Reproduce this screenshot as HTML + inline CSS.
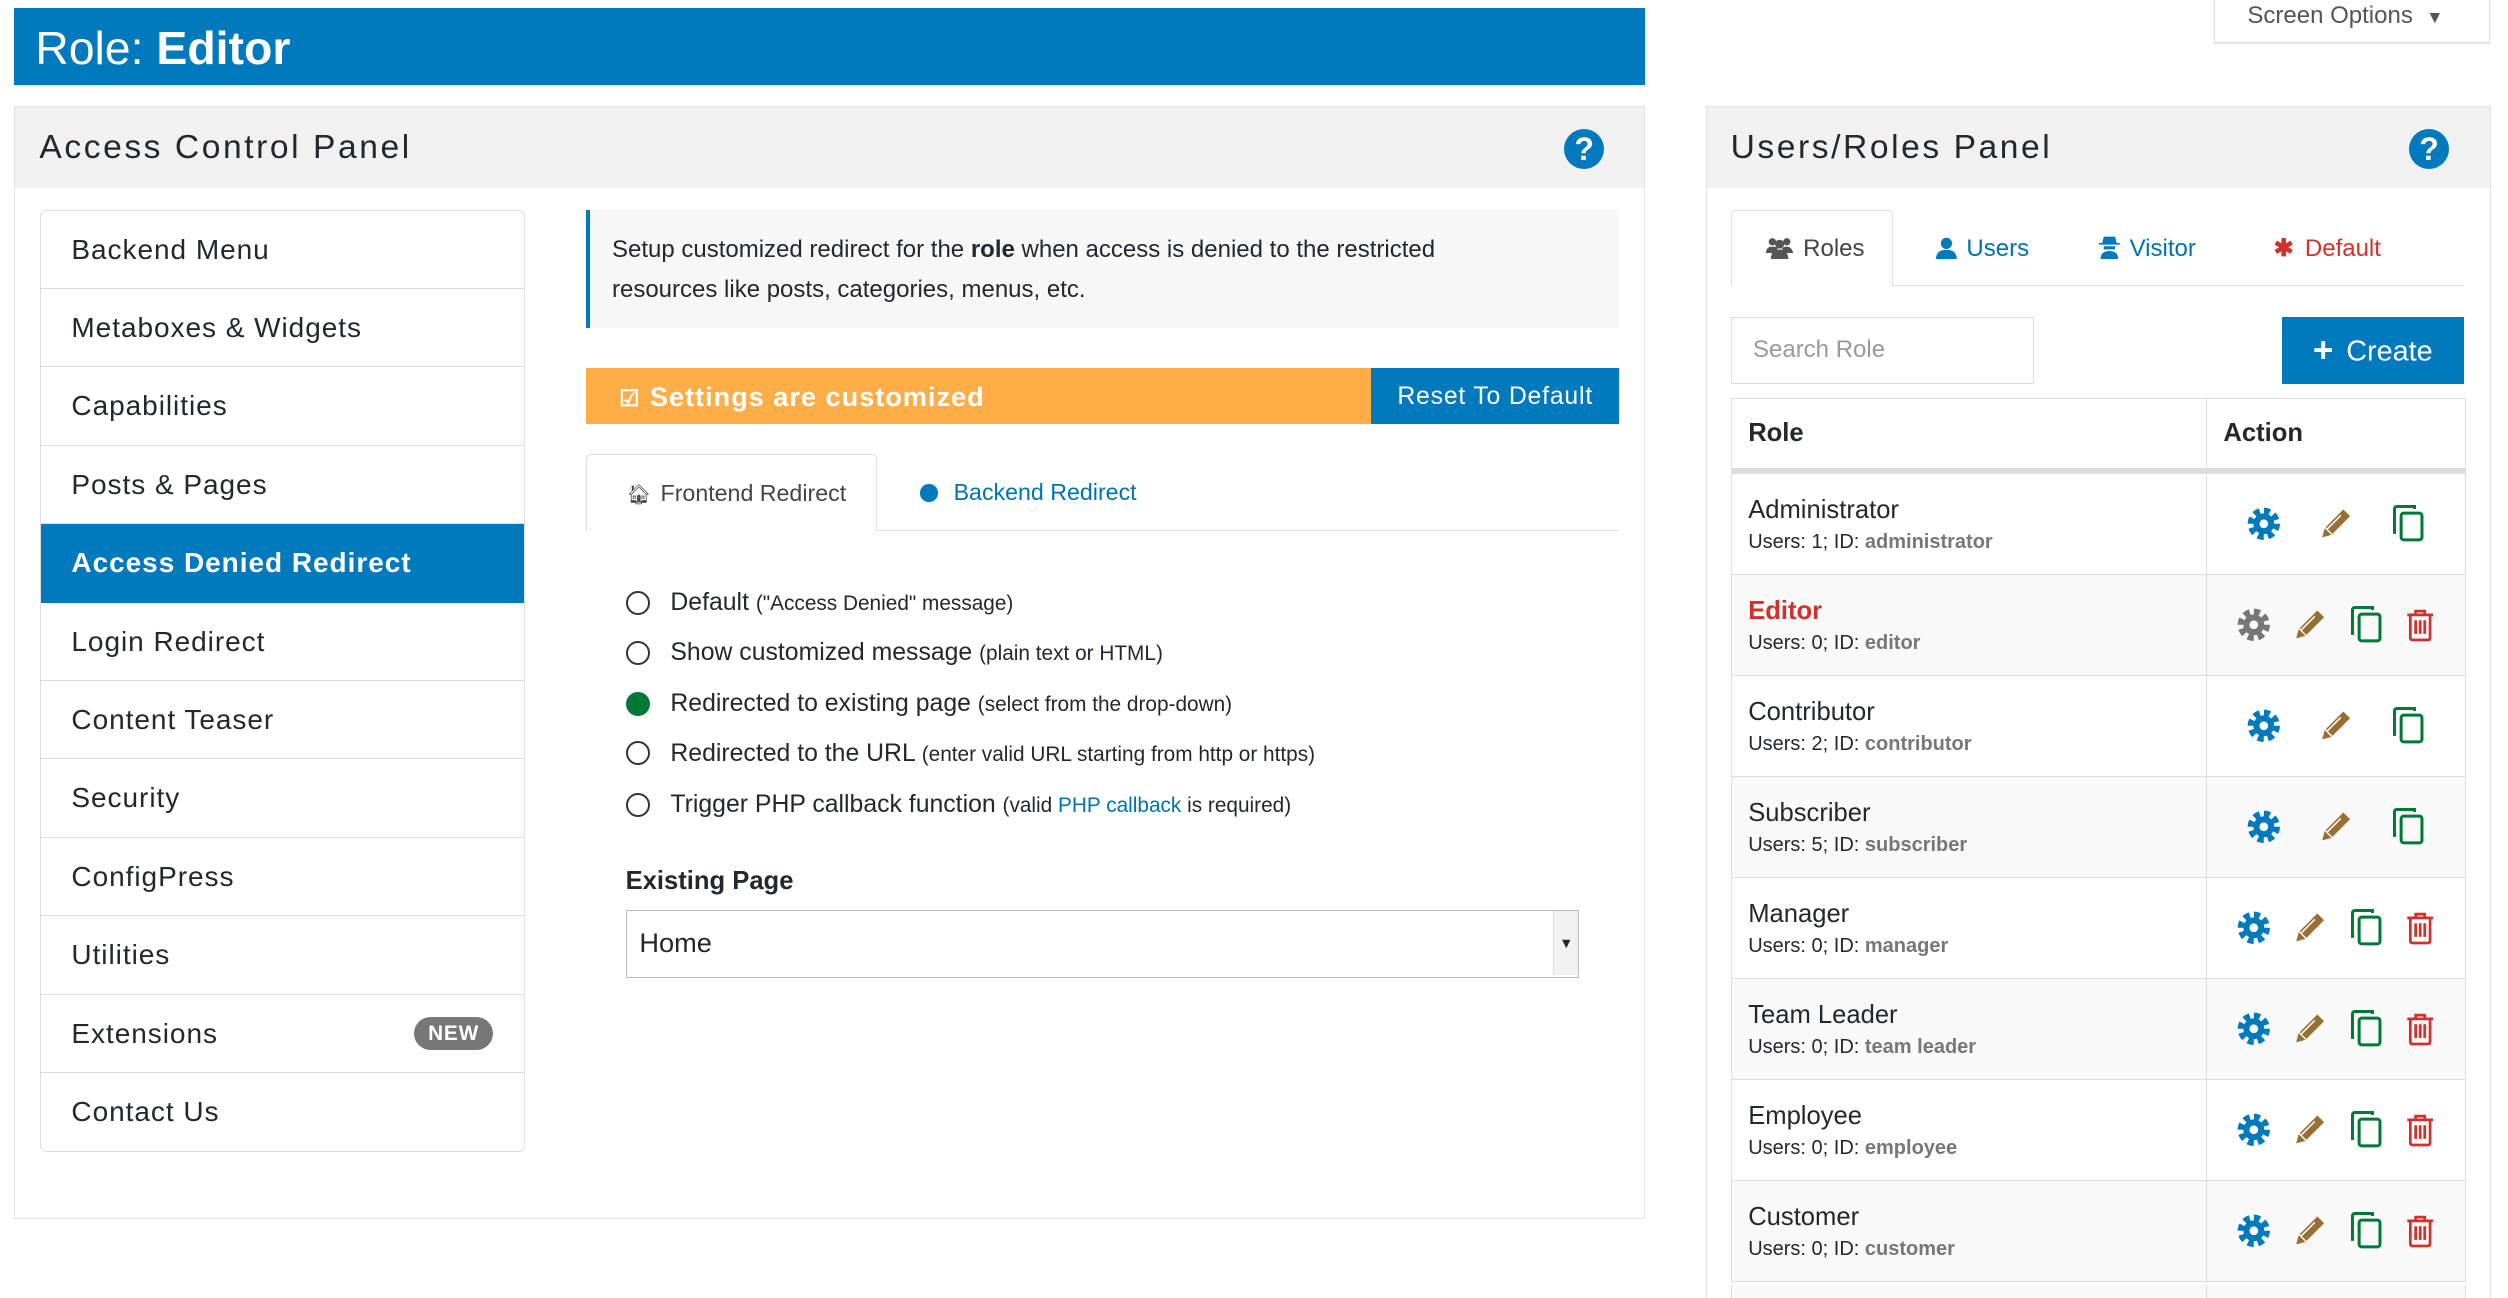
<!DOCTYPE html>
<html><head><meta charset="utf-8">
<style>
html,body{margin:0;padding:0;background:#fff;overflow:hidden}
body{width:2508px;height:1298px}
#w{zoom:1.6;width:1568px;height:812px;position:relative;overflow:hidden;font-family:"Liberation Sans",Arial,sans-serif;color:#23282d}
.a{position:absolute}
.title{left:9px;top:5px;width:1019px;height:48px;background:#0079bd;color:#fff;font-size:29px;line-height:50px;box-sizing:border-box;padding-left:13px}
.so{left:1384px;top:-2px;width:172px;height:29px;border:1px solid #ddd;border-top:0;box-shadow:0 1px 1px rgba(0,0,0,.08);font-size:15px;color:#555;line-height:24px;box-sizing:border-box;padding-left:20px}
.panel{border:1px solid #e2e2e2;background:#fff;box-sizing:border-box}
.ph{position:absolute;left:0;top:0;right:0;height:51px;background:#f1f1f1;font-size:21px;letter-spacing:1.6px;line-height:51px;padding-left:15px}
.help{position:absolute;width:25px;height:25px;border-radius:50%;background:#0079bd;color:#fff;font-weight:bold;font-size:20px;text-align:center;line-height:25px}
.menu{left:25px;top:131px;width:303px;height:589px;border:1px solid #ddd;border-radius:4px;box-sizing:border-box;overflow:hidden}
.mi{height:49px;border-bottom:1px solid #ddd;box-sizing:border-box;font-size:17.5px;letter-spacing:.6px;line-height:49px;padding-left:19px;position:relative}
.mi.act{background:#0079bd;color:#fff;font-weight:bold;border-color:#0079bd}
.new{position:absolute;right:19px;top:14px;background:#777;color:#fff;font-size:13px;font-weight:bold;letter-spacing:.5px;line-height:21px;height:21px;padding:0 9px;border-radius:11px}
.info{left:366px;top:131px;width:646px;height:74px;background:#f7f7f7;border-left:3px solid #0079bd;box-sizing:border-box;padding:13px 50px 0 14px;font-size:15px;line-height:25px}
.orange{left:366px;top:230px;width:491px;height:35px;background:#ffad46;color:#fff;font-weight:bold;font-size:17px;letter-spacing:.6px;line-height:36px;padding-left:21px;box-sizing:border-box}
.reset{left:857px;top:230px;width:155px;height:35px;background:#0079bd;color:#fff;font-size:15.5px;letter-spacing:.5px;line-height:36px;text-align:center}
.tabline{left:366px;top:331px;width:646px;height:1px;background:#ddd}
.tab1{left:366px;top:284px;width:182px;height:48px;border:1px solid #ddd;border-bottom:0;border-radius:3px 3px 0 0;background:#fff;box-sizing:border-box;font-size:14.5px;color:#444;line-height:48px;padding-left:25px}
.tab2{left:575px;top:284px;height:48px;line-height:48px;font-size:14.5px;color:#0073aa}
.rad{left:391px;font-size:15.5px;height:20px;line-height:20px}
.rad i{display:inline-block;width:15px;height:15px;border:1.5px solid #333;border-radius:50%;vertical-align:-3px;margin-right:13px;box-sizing:border-box}
.rad small{font-size:13px}
.sel{left:391px;top:569px;width:596px;height:42px;border:1px solid #bbb;box-sizing:border-box;font-size:17px;line-height:40px;padding-left:8px}
.sel b{position:absolute;right:0;top:0;width:15px;height:40px;background:#f1f1f1;border-left:1px solid #ddd;font-size:9px;line-height:42px;text-align:center}
.rt{position:absolute;top:132px;height:47px;line-height:47px;font-size:15px}
.rt svg{vertical-align:-2px;margin-right:6px}
.srch{left:1082px;top:198px;width:189px;height:42px;border:1px solid #ddd;box-sizing:border-box;color:#999;font-size:15px;line-height:40px;padding-left:13px}
.create{left:1426px;top:198px;width:114px;height:42px;background:#0079bd;color:#fff;font-size:18px;line-height:42px;text-align:center}
table{position:absolute;left:1082px;top:249px;width:459px;border-collapse:collapse;table-layout:fixed}
td,th{border:1px solid #ddd;padding:0 0 0 10px;text-align:left;vertical-align:middle}
th{height:43px;font-size:16px;border-bottom:4px solid #ddd}
td{height:62.5px}
td:first-child{padding-top:3px;box-sizing:border-box}
tr:nth-child(odd) td{background:#f9f9f9}
.nm{font-size:16px;line-height:20px}
.sub{font-size:12.5px;line-height:21px}
.sub b{color:#777}
.ic{white-space:nowrap;text-align:center;padding:0}
.ic svg{vertical-align:middle}
.i3 svg{margin:0 12px}
.i4 svg{margin:0 7px}
</style></head><body><div id="w">
<svg width="0" height="0" style="position:absolute">
<defs>
<symbol id="gear" viewBox="0 0 20 20"><circle cx="10" cy="10" r="6.2" fill="currentColor"/><circle cx="10" cy="10" r="7.8" fill="none" stroke="currentColor" stroke-width="3.6" stroke-dasharray="3.6 2.5"/><circle cx="10" cy="10" r="2.6" fill="#fff"/></symbol>
<symbol id="pen" viewBox="0 0 20 20"><path d="M14.5 1.5l4 4-10.5 10.5-4-4z" fill="currentColor"/><path d="M3.4 12.6l4 4-5.5 1.5z" fill="currentColor"/><path d="M5 13l8-8" stroke="#fff" stroke-width=".9"/></symbol>
<symbol id="copy" viewBox="0 0 20 24"><path d="M3 17H2V3q0-1.5 1.5-1.5H14V3" fill="none" stroke="currentColor" stroke-width="1.8"/><rect x="6" y="5.5" width="12.5" height="16" rx="1.5" fill="none" stroke="currentColor" stroke-width="1.8"/></symbol>
<symbol id="trash" viewBox="0 0 20 22"><path d="M1.5 4.5h17M7 4.5V2h6v2.5M3.5 5v14.5q0 1.5 1.5 1.5h10q1.5 0 1.5-1.5V5M7 8v9M10 8v9M13 8v9" fill="none" stroke="currentColor" stroke-width="1.8"/></symbol>
</defs></svg>

<div class="a title">Role: <b>Editor</b></div>
<div class="a so">Screen Options &nbsp;<span style="font-size:11px">▼</span></div>

<div class="a panel" style="left:9px;top:66px;width:1019px;height:696px">
<div class="ph">Access Control Panel</div><div class="help" style="left:968px;top:14px">?</div>
</div>
<div class="a menu">
<div class="mi">Backend Menu</div><div class="mi">Metaboxes &amp; Widgets</div><div class="mi">Capabilities</div><div class="mi">Posts &amp; Pages</div><div class="mi act">Access Denied Redirect</div><div class="mi">Login Redirect</div><div class="mi">Content Teaser</div><div class="mi">Security</div><div class="mi">ConfigPress</div><div class="mi">Utilities</div><div class="mi">Extensions<span class="new">NEW</span></div><div class="mi" style="border:0">Contact Us</div>
</div>
<div class="a info">Setup customized redirect for the <b>role</b> when access is denied to the restricted resources like posts, categories, menus, etc.</div>
<div class="a orange"><span style="font-size:14px;margin-right:6px">☑</span>Settings are customized</div>
<div class="a reset">Reset To Default</div>
<div class="a tabline"></div>
<div class="a tab1"><span style="font-size:12px;margin-right:6px">🏠︎</span>Frontend Redirect</div>
<div class="a tab2"><span style="display:inline-block;width:11px;height:11px;border-radius:50%;background:#0079bd;margin-right:10px;vertical-align:-1px"></span>Backend Redirect</div>
<div class="a rad" style="top:367px"><i></i>Default <small>("Access Denied" message)</small></div>
<div class="a rad" style="top:398px"><i></i>Show customized message <small>(plain text or HTML)</small></div>
<div class="a rad" style="top:430px"><i style="background:#007836;border-color:#007836"></i>Redirected to existing page <small>(select from the drop-down)</small></div>
<div class="a rad" style="top:461px"><i></i>Redirected to the URL <small>(enter valid URL starting from http or https)</small></div>
<div class="a rad" style="top:493px"><i></i>Trigger PHP callback function <small>(valid <span style="color:#0073aa">PHP callback</span> is required)</small></div>
<div class="a" style="left:391px;top:542px;font-size:16px;font-weight:bold">Existing Page</div>
<div class="a sel">Home<b>▼</b></div>

<div class="a panel" style="left:1066px;top:66px;width:491px;height:746px;border-bottom:0">
<div class="ph">Users/Roles Panel</div><div class="help" style="left:439px;top:14px">?</div>
</div>
<div class="a" style="left:1082px;top:178px;width:458px;height:1px;background:#ddd"></div>
<div class="a" style="left:1082px;top:131px;width:101px;height:48px;border:1px solid #ddd;border-bottom:1px solid #fff;border-radius:3px 3px 0 0;box-sizing:border-box;background:#fff"></div>
<div class="rt" style="left:1104px;color:#444"><svg width="17" height="14" viewBox="0 0 17 14" fill="#555"><circle cx="4" cy="3" r="2.3"/><circle cx="13" cy="3" r="2.3"/><circle cx="8.5" cy="4.5" r="2.8"/><path d="M0 10q0-4 4-4t3 2h3q0-2 3-2t4 4zM3 14q0-6 5.5-6T14 14z"/></svg>Roles</div>
<div class="rt" style="left:1210px;color:#0073aa"><svg width="13" height="14" viewBox="0 0 13 14" fill="#0079bd"><circle cx="6.5" cy="4" r="3.5"/><path d="M0 14q0-6 6.5-6T13 14z"/></svg>Users</div>
<div class="rt" style="left:1312px;color:#0073aa"><svg width="13" height="15" viewBox="0 0 13 15" fill="#0079bd"><path d="M3 1h7l1 4H2zM0 5h13v1H0zM3 7h7v2H3zM1 15q0-5 5.5-5T12 15z"/></svg>Visitor</div>
<div class="rt" style="left:1421px;color:#d0312d"><span style="font-weight:bold;margin-right:7px">✱</span>Default</div>
<div class="a srch">Search Role</div>
<div class="a create"><b style="font-size:22px;vertical-align:-1px;margin-right:8px">+</b>Create</div>
<table>
<colgroup><col style="width:297px"><col></colgroup>
<tr><th>Role</th><th>Action</th></tr>
<tr><td><div class="nm">Administrator</div><div class="sub">Users: 1; ID: <b>administrator</b></div></td><td class="ic i3"><svg width="21" height="21" style="color:#0079bd"><use href="#gear"/></svg><svg width="21" height="21" style="color:#996e31"><use href="#pen"/></svg><svg width="21" height="25" style="color:#007836"><use href="#copy"/></svg></td></tr>
<tr><td><div class="nm" style="color:#d0312d;font-weight:bold">Editor</div><div class="sub">Users: 0; ID: <b>editor</b></div></td><td class="ic i4"><svg width="21" height="21" style="color:#777"><use href="#gear"/></svg><svg width="21" height="21" style="color:#996e31"><use href="#pen"/></svg><svg width="21" height="25" style="color:#007836"><use href="#copy"/></svg><svg width="19" height="21" style="color:#d0312d"><use href="#trash"/></svg></td></tr>
<tr><td><div class="nm">Contributor</div><div class="sub">Users: 2; ID: <b>contributor</b></div></td><td class="ic i3"><svg width="21" height="21" style="color:#0079bd"><use href="#gear"/></svg><svg width="21" height="21" style="color:#996e31"><use href="#pen"/></svg><svg width="21" height="25" style="color:#007836"><use href="#copy"/></svg></td></tr>
<tr><td><div class="nm">Subscriber</div><div class="sub">Users: 5; ID: <b>subscriber</b></div></td><td class="ic i3"><svg width="21" height="21" style="color:#0079bd"><use href="#gear"/></svg><svg width="21" height="21" style="color:#996e31"><use href="#pen"/></svg><svg width="21" height="25" style="color:#007836"><use href="#copy"/></svg></td></tr>
<tr><td><div class="nm">Manager</div><div class="sub">Users: 0; ID: <b>manager</b></div></td><td class="ic i4"><svg width="21" height="21" style="color:#0079bd"><use href="#gear"/></svg><svg width="21" height="21" style="color:#996e31"><use href="#pen"/></svg><svg width="21" height="25" style="color:#007836"><use href="#copy"/></svg><svg width="19" height="21" style="color:#d0312d"><use href="#trash"/></svg></td></tr>
<tr><td><div class="nm">Team Leader</div><div class="sub">Users: 0; ID: <b>team leader</b></div></td><td class="ic i4"><svg width="21" height="21" style="color:#0079bd"><use href="#gear"/></svg><svg width="21" height="21" style="color:#996e31"><use href="#pen"/></svg><svg width="21" height="25" style="color:#007836"><use href="#copy"/></svg><svg width="19" height="21" style="color:#d0312d"><use href="#trash"/></svg></td></tr>
<tr><td><div class="nm">Employee</div><div class="sub">Users: 0; ID: <b>employee</b></div></td><td class="ic i4"><svg width="21" height="21" style="color:#0079bd"><use href="#gear"/></svg><svg width="21" height="21" style="color:#996e31"><use href="#pen"/></svg><svg width="21" height="25" style="color:#007836"><use href="#copy"/></svg><svg width="19" height="21" style="color:#d0312d"><use href="#trash"/></svg></td></tr>
<tr><td><div class="nm">Customer</div><div class="sub">Users: 0; ID: <b>customer</b></div></td><td class="ic i4"><svg width="21" height="21" style="color:#0079bd"><use href="#gear"/></svg><svg width="21" height="21" style="color:#996e31"><use href="#pen"/></svg><svg width="21" height="25" style="color:#007836"><use href="#copy"/></svg><svg width="19" height="21" style="color:#d0312d"><use href="#trash"/></svg></td></tr>
</table>
<div class="a" style="left:1082px;top:803px;width:459px;height:9px;background:#f9f9f9;border-left:1px solid #ddd;border-right:1px solid #ddd;box-sizing:border-box"><div style="position:absolute;left:296px;top:0;width:1px;height:9px;background:#ddd"></div></div>
</div></body></html>
